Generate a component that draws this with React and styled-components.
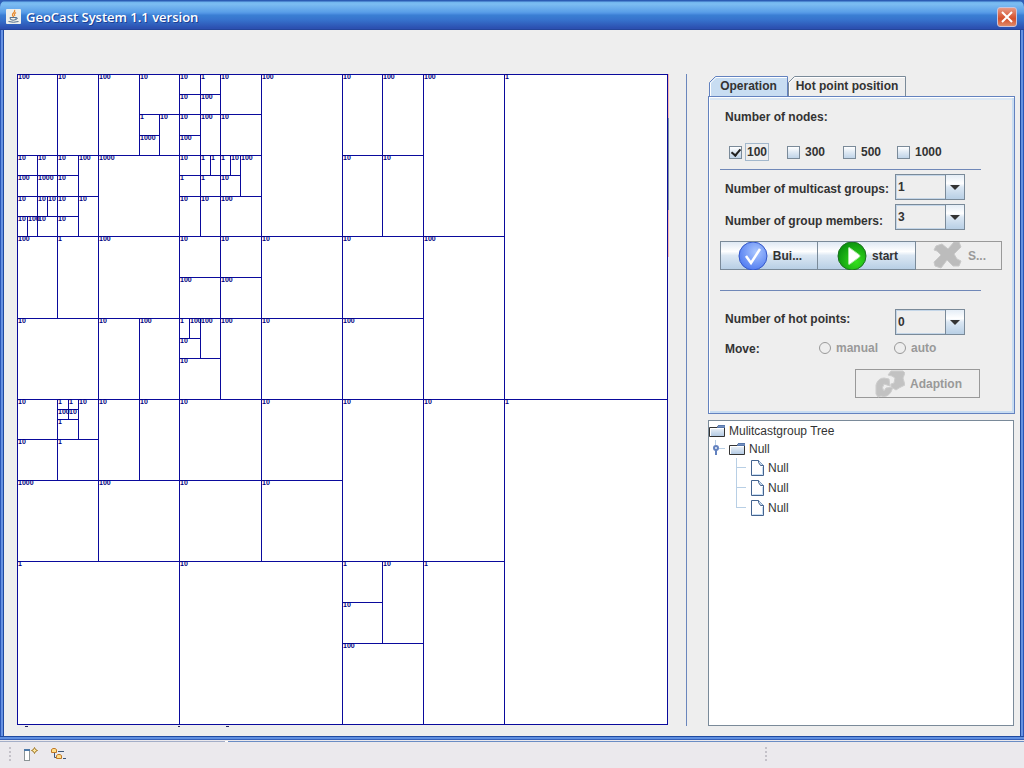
import React from 'react';
import styled, { createGlobalStyle, css } from 'styled-components';

const GlobalStyle = createGlobalStyle`
  * { box-sizing: border-box; }
  body {
    margin: 0;
    background: #ebe9ed;
    color: #333;
    font: bold 12px/18px "Liberation Sans", Arial, sans-serif;
  }
  button, select, input { font: inherit; color: inherit; margin: 0; }
`;

/* ---------- window frame ---------- */

const Desktop = styled.div`
  min-height: 100vh;
  display: flex;
  flex-direction: column;
  background: #2f5fb8;
`;

const Frame = styled.div`
  display: flex;
  flex-direction: column;
`;

const TitleBar = styled.header`
  height: 30px;
  display: flex;
  align-items: center;
  gap: 5px;
  padding: 4px 7px 0 6px;
  border-radius: 7px 7px 0 0;
  border-bottom: 1px solid #24459a;
  background: linear-gradient(#2c5cb4 0, #2c5cb4 1px, #6fb4ee 2px, #7dbdf2 4px, #5a9fe8 12px, #4a8de0 14px, #3a7fd4 15px, #3672cc 20px, #2c50b0 28px);
`;

const Title = styled.h1`
  flex: 1;
  margin: 0;
  color: #fff;
  font: 600 13px/18px "Open Sans", "Noto Sans", sans-serif;
  text-shadow: 1px 1px 0 #1c3f94;
`;

const CloseButton = styled.button`
  width: 20px;
  height: 20px;
  padding: 0;
  display: grid;
  place-items: center;
  border: 1px solid #c9c4dc;
  border-radius: 3px;
  background: linear-gradient(#e79a86, #d9603f 45%, #d4502c 60%, #e08a68);
`;

const Sides = styled.div`
  padding: 0 3px;
  border: solid #2a57b8;
  border-width: 0 1px;
  background: #6792e2;
`;

const Body = styled.main`
  display: grid;
  grid-template-columns: minmax(0, 1fr) 1px 310px;
  column-gap: 18px;
  padding: 44px 5px 10px 13px;
  background: #eee;
  box-shadow: -1px 0 0 #1f4aa0, 1px 0 0 #1f4aa0;
`;

const FrameBottom = styled.div`
  height: 4px;
  background: linear-gradient(#1f4aa0 0 1px, #5f8fe0 1px 3px, #3560b8 3px 4px);
`;

const Divider = styled.div`
  background: #6a86bc;
`;

const Side = styled.aside`
  display: flex;
  flex-direction: column;
  min-width: 0;
  padding-left: 3px;
`;

/* ---------- cell map ---------- */

const MapSvg = styled.svg`
  display: block;
  width: 100%;
  height: auto;
  overflow: visible;
  rect { fill: #fff; stroke: #0a0a9c; stroke-width: 1; }
  text { font: bold 7px "Liberation Sans", Arial, sans-serif; fill: #000080; }
`;

// x, y, width, height in 1/64 of the area, then the cell's capacity
const CELLS = [
  [0, 0, 4, 8, 100], [4, 0, 4, 8, 10], [8, 0, 4, 8, 100], [12, 0, 4, 4, 10],
  [12, 4, 2, 2, 1], [12, 6, 2, 2, 1000], [14, 4, 2, 4, 10],
  [16, 0, 2, 2, 10], [18, 0, 2, 2, 1], [16, 2, 2, 2, 10], [18, 2, 2, 2, 100],
  [20, 0, 4, 4, 10], [16, 4, 2, 2, 10], [16, 6, 2, 2, 100], [18, 4, 2, 4, 100],
  [20, 4, 4, 4, 10], [24, 0, 8, 16, 100], [32, 0, 4, 8, 10], [36, 0, 4, 8, 100],
  [32, 8, 4, 8, 10], [36, 8, 4, 8, 10], [40, 0, 8, 16, 100], [48, 0, 16, 32, 1],
  [0, 8, 2, 2, 10], [2, 8, 2, 2, 10], [4, 8, 2, 2, 10], [6, 8, 2, 4, 100],
  [0, 10, 2, 2, 100], [2, 10, 2, 2, 1000], [4, 10, 2, 2, 10],
  [0, 12, 2, 2, 10], [2, 12, 1, 2, 10], [3, 12, 1, 2, 10], [4, 12, 2, 2, 10],
  [6, 12, 2, 4, 10], [0, 14, 1, 2, 10], [1, 14, 1, 2, 100], [2, 14, 2, 2, 10],
  [4, 14, 2, 2, 10], [8, 8, 8, 8, 1000],
  [16, 8, 2, 2, 10], [18, 8, 1, 2, 1], [19, 8, 1, 2, 1], [20, 8, 1, 2, 1],
  [21, 8, 1, 2, 10], [22, 8, 2, 4, 100], [16, 10, 2, 2, 1], [18, 10, 2, 2, 1],
  [20, 10, 2, 2, 10], [16, 12, 2, 4, 10], [18, 12, 2, 4, 10], [20, 12, 4, 4, 100],
  [0, 16, 4, 8, 100], [4, 16, 4, 8, 1], [8, 16, 8, 8, 100], [16, 16, 4, 4, 10],
  [20, 16, 4, 4, 10], [16, 20, 4, 4, 100], [20, 20, 4, 4, 100], [24, 16, 8, 8, 10],
  [32, 16, 8, 8, 10], [40, 16, 8, 16, 100],
  [0, 24, 8, 8, 10], [8, 24, 4, 8, 10], [12, 24, 4, 8, 100], [16, 24, 1, 2, 1],
  [17, 24, 1, 2, 100], [18, 24, 2, 4, 100], [16, 26, 2, 2, 10], [16, 28, 4, 4, 10],
  [20, 24, 4, 8, 100], [24, 24, 8, 8, 10], [32, 24, 8, 8, 100],
  [0, 32, 4, 4, 10], [4, 32, 1, 1, 1], [5, 32, 1, 1, 1], [6, 32, 2, 4, 10],
  [4, 33, 1, 1, 100], [5, 33, 1, 1, 10], [4, 34, 2, 2, 1], [0, 36, 4, 4, 10],
  [4, 36, 4, 4, 1], [8, 32, 4, 8, 10], [12, 32, 4, 8, 10], [16, 32, 8, 8, 10],
  [24, 32, 8, 8, 10], [32, 32, 8, 16, 10], [40, 32, 8, 16, 10], [48, 32, 16, 32, 1],
  [0, 40, 8, 8, 1000], [8, 40, 8, 8, 100], [16, 40, 8, 8, 10], [24, 40, 8, 8, 10],
  [0, 48, 16, 16, 1], [16, 48, 16, 16, 10], [32, 48, 4, 4, 1], [36, 48, 4, 8, 10],
  [32, 52, 4, 4, 10], [32, 56, 8, 8, 100], [40, 48, 8, 16, 1],
];

const pos = (u) => Math.round((u * 650) / 64 - 0.2);

function CellMap() {
  return (
    <MapSvg viewBox="0 0 651 652" role="img" aria-label="Cell map">
      {CELLS.map(([x, y, w, h]) => (
        <rect
          key={`${x}-${y}`}
          x={pos(x) + 0.5}
          y={pos(y) + 0.5}
          width={pos(x + w) - pos(x)}
          height={pos(y + h) - pos(y)}
        />
      ))}
      {CELLS.map(([x, y, , , label]) => (
        <text key={`${x}-${y}`} x={pos(x) + 1} y={pos(y) + 5}>{label}</text>
      ))}
      <path d="M8 652.5h3M161 652.5h2M209 652.5h3" stroke="#222260" />
      <path d="M651.5 0V44M651.5 136V183" stroke="#f5b5ac" />
      <path d="M651.5 44V136" stroke="#7a8fa0" />
    </MapSvg>
  );
}

/* ---------- tabs and panel ---------- */

const Tabs = styled.div`
  display: flex;
  height: 22px;
  padding: 2px 0 0 1px;
`;

const Tab = styled.button`
  position: relative;
  width: ${(p) => p.$width}px;
  height: 20px;
  padding: 0 0 1px;
  border: 0;
  background: none;
  z-index: 0;
  svg { position: absolute; inset: 0; z-index: -1; }
`;

function TabButton({ selected, width, children }) {
  const edge = selected ? '#6382bf' : '#7a8a99';
  return (
    <Tab $width={width} role="tab" aria-selected={selected}>
      <svg width={width} height="20">
        <path
          d={`M.5 20V6.5L6.5 .5H${width - 0.5}V20`}
          fill={selected ? '#c8ddf2' : '#eee'}
          stroke={edge}
        />
        <path d={`M1.5 20V7L7 1.5H${width - 1}`} fill="none" stroke="#fff" />
      </svg>
      {children}
    </Tab>
  );
}

const Panel = styled.section`
  display: flex;
  flex-direction: column;
  padding: 11px 11px 15px;
  border: 1px solid #6382bf;
  box-shadow: inset 1px 1px 0 #fff, inset -2px -2px 0 #c8ddf2, inset 0 3px 0 #dbe7f3;
`;

const Caption = styled.div`
  padding-left: 5px;
`;

const Rule = styled.hr`
  width: 261px;
  height: 1px;
  margin: ${(p) => p.$top}px 0 ${(p) => p.$bottom}px;
  border: 0;
  background: #7088b8;
`;

const Checks = styled.div`
  display: grid;
  grid-template-columns: 58px 56px 54px auto;
  align-items: center;
  height: 22px;
  margin-top: 15px;
  padding-left: 9px;
`;

const Option = styled.label`
  display: flex;
  align-items: center;
  gap: 3px;
  ${(p) => p.$disabled && css`color: #999;`}
`;

const OptionText = styled.span`
  padding: 0 1px;
  border: 1px solid ${(p) => (p.$focused ? '#a3b8cc' : 'transparent')};
  line-height: 16px;
`;

const Check = styled.input.attrs({ type: 'checkbox' })`
  appearance: none;
  width: 13px;
  height: 13px;
  border: 1px solid #7a8a99;
  background: linear-gradient(#fff, #dde8f3 50%, #c0d4e8);
  display: grid;
  place-items: center;
  &:checked::after {
    content: "";
    width: 4px;
    height: 7px;
    border: solid #222;
    border-width: 0 2px 2px 0;
    transform: rotate(40deg);
    margin-top: -2px;
  }
`;

const Radio = styled.input.attrs({ type: 'radio' })`
  appearance: none;
  width: 12px;
  height: 12px;
  border: 1px solid #999;
  border-radius: 50%;
`;

const Field = styled.div`
  display: flex;
  justify-content: space-between;
  align-items: flex-start;
  height: 26px;
  margin-bottom: 4px;
  padding: 0 38px 0 5px;
  label { padding-top: ${(p) => p.$drop}px; }
`;

const Combo = styled.span`
  position: relative;
  width: 70px;
  height: 26px;
`;

const Select = styled.select`
  appearance: none;
  width: 70px;
  height: 26px;
  padding: 0 22px 1px 2px;
  border: 1px solid #7a8a99;
  border-radius: 0;
  background: #eee;
  box-shadow: inset 0 0 0 1px #c4d6e8;
`;

const Arrow = styled.span`
  position: absolute;
  top: 0;
  right: 0;
  width: 20px;
  height: 26px;
  display: grid;
  place-items: center;
  border: 1px solid #7a8a99;
  background: linear-gradient(#e4edf6, #fff 35%, #dbe7f3 50%, #b8cfe5);
  pointer-events: none;
`;

function ComboField({ id, label, value, drop }) {
  return (
    <Field $drop={drop}>
      <label htmlFor={id}>{label}</label>
      <Combo>
        <Select id={id} defaultValue={value}>
          <option>0</option>
          <option>1</option>
          <option>2</option>
          <option>3</option>
        </Select>
        <Arrow>
          <svg width="10" height="5"><path d="M0 0H10L5 5Z" fill="#333" /></svg>
        </Arrow>
      </Combo>
    </Field>
  );
}

const Buttons = styled.div`
  display: flex;
  margin-top: 7px;
`;

const PushButton = styled.button`
  display: flex;
  align-items: center;
  justify-content: center;
  gap: 5px;
  width: ${(p) => p.$width}px;
  height: 29px;
  padding: 0 0 0 2px;
  border: 1px solid #7a8a99;
  background: linear-gradient(#dfe9f4, #fff 35%, #dbe7f3 50%, #b8cfe5);
  & + & { border-left-width: 0; }
  &:disabled {
    color: #999;
    background: #eee;
    border-color: #999;
  }
  svg { flex: none; }
`;

const MoveRow = styled.div`
  display: flex;
  align-items: center;
  height: 18px;
  padding-left: 5px;
`;

const MoveLabel = styled.span`
  width: 94px;
  padding-top: 2px;
`;

const Radios = styled.div`
  display: flex;
  gap: 14px;
`;

const AdaptionRow = styled.div`
  display: flex;
  justify-content: flex-end;
  margin-top: 12px;
  padding-right: 23px;
`;

/* ---------- tree ---------- */

const Tree = styled.div`
  flex: 1;
  margin: 6px 1px 0 0;
  padding-top: 1px;
  border: 1px solid #7a8a99;
  background: #fff;
  font-weight: normal;
  ul { list-style: none; margin: 0; padding: 0; }
`;

const TreeRow = styled.div`
  display: flex;
  align-items: center;
  gap: 4px;
  height: ${(p) => p.$height}px;
  padding-left: ${(p) => p.$indent}px;
`;

const Folder = () => (
  <svg width="16" height="14">
    <defs>
      <linearGradient id="folder" x2="0" y2="1">
        <stop offset="0" stopColor="#fff" />
        <stop offset="1" stopColor="#b0c8e2" />
      </linearGradient>
    </defs>
    <path d="M.5 3.5H8L9.500 1.500H15.500V12.500H.5Z" fill="url(#folder)" stroke="#333" />
    <path d="M9 1.500H16V3.500H8" fill="#7590c0" stroke="#5878ac" />
    <path d="M1.500 12V4.500H15" fill="none" stroke="#fff" />
  </svg>
);

const Sheet = () => (
  <svg width="13" height="16">
    <path d="M.5 .5H7.500L12.500 5.500V15.500H.5Z" fill="#fff" stroke="#44638f" />
    <path d="M7.500 .5V2.500L9.500 5.500H12.500" fill="#c8ddf2" stroke="#44638f" />
    <path d="M11.500 7V14.500H1.500" fill="none" stroke="#c8ddf2" />
  </svg>
);

const Handle = () => (
  <svg width="14" height="18">
    <path d="M4.500 0V5M8 8.500H14" stroke="#b8cfe5" />
    <circle cx="5" cy="8" r="2" fill="#e8f0fa" stroke="#6382bf" strokeWidth="2" />
    <path d="M5 10V15" stroke="#6382bf" strokeWidth="2" />
  </svg>
);

const Branch = ({ last }) => (
  <svg width="11" height="20">
    <path d={`M.5 0V${last ? 10 : 20}M0 9.500H10`} stroke="#b8cfe5" fill="none" />
  </svg>
);

/* ---------- button and title icons ---------- */

const JavaIcon = () => (
  <svg width="15" height="15">
    <rect width="15" height="15" rx="1" fill="#eef0ec" />
    <path d="M8.500 1C10 3 6 4 6.500 6C6.700 7 7.500 7 7.500 8M10 3.500C8 5 8 5.500 9 7" fill="none" stroke="#e88a2c" strokeWidth="1.300" />
    <path d="M4 8.500H10V10.500Q7 12 4.500 10.500ZM10 8.500Q12.500 8.500 10.500 10.500M2.500 12.500Q7.500 14 12.500 12.500" fill="none" stroke="#55718e" />
  </svg>
);

const BuildIcon = () => (
  <svg width="30" height="28" viewBox="0 0 30 28">
    <defs>
      <radialGradient id="build" cx=".6" cy=".35" r=".7">
        <stop offset="0" stopColor="#a9c6ff" />
        <stop offset="1" stopColor="#4f7af0" />
      </radialGradient>
    </defs>
    <circle cx="15" cy="14" r="14" fill="url(#build)" stroke="#3558c8" />
    <path d="M8 14L13 21L22 7" fill="none" stroke="#fff" strokeWidth="2.500" />
  </svg>
);

const StartIcon = () => (
  <svg width="30" height="28" viewBox="0 0 30 28">
    <defs>
      <radialGradient id="start" cx=".65" cy=".7" r=".8">
        <stop offset="0" stopColor="#35e01c" />
        <stop offset="1" stopColor="#058a0c" />
      </radialGradient>
    </defs>
    <circle cx="15" cy="14" r="14" fill="url(#start)" stroke="#1d7020" />
    <path d="M11.500 6.500Q11.500 5 13 6L22.500 13Q23.500 14 22.500 15L13 22Q11.500 23 11.500 21.500Z" fill="#fff" stroke="#a8e8a0" />
  </svg>
);

const StopIcon = () => (
  <svg width="30" height="28" viewBox="0 0 30 28">
    <path
      d="M3 4L9 2L15 7L21 0H26L28 5L21 12L24 17L28 19L26 24L20 24L14 18L8 26L2 24L1 20L8 13L4 9L1 8Z"
      fill="#bcbcbc"
      stroke="#c8c8c8"
      strokeLinejoin="round"
    />
  </svg>
);

const AdaptionIcon = () => (
  <svg width="30" height="28" viewBox="0 0 30 28">
    <path d="M1 24L1 15Q3 8 9 8L14 9L15 16L9 14Q6 18 9 21L11 18L18 17L16 22Q12 28 6 26L3 27Z" fill="#c2c2c2" stroke="#cdcdcd" />
    <path d="M13 5L16 1H28L30 3L28 8L30 15L24 18L21 20L16 17V14L19 13L20 8L17 6Z" fill="#c2c2c2" stroke="#cdcdcd" />
  </svg>
);

/* ---------- status bar ---------- */

const StatusBar = styled.footer`
  flex: 1;
  min-height: 28px;
  display: flex;
  align-items: center;
  padding: 0 8px;
  background: linear-gradient(90deg, #a3aec8 0 225px, #fff 225px 228px, #6a8cc4 228px) 0 1px / 100% 1px no-repeat #ebe9ed;
`;

const StatusTools = styled.div`
  flex: 3;
  display: flex;
  align-items: center;
  gap: 12px;
`;

const StatusRest = styled.div`
  display: flex;
  flex: 1;
`;

const Grip = () => (
  <svg width="4" height="14">
    <path d="M1 1h2M1 5h2M1 9h2M1 13h2" stroke="#9d9aa5" />
  </svg>
);

const NewViewIcon = () => (
  <svg width="15" height="14">
    <rect x=".5" y="2.500" width="5" height="11" fill="#fff" stroke="#8c9496" />
    <path d="M0 3H6" stroke="#4c78a8" strokeWidth="2" />
    <path d="M10.500 .5L11.500 2.500L13.500 3.500L11.500 4.500L10.500 6.500L9.500 4.500L7.500 3.500L9.500 2.500Z" fill="#ffe9a0" stroke="#a07828" />
  </svg>
);

const HierarchyIcon = () => (
  <svg width="16" height="14">
    <path d="M3.500 6V10.500H6M7 4.500H13M12 11.500H15" fill="none" stroke="#3e5878" />
    <path d="M.5 5.500V2.500L2 1.500H4L5.500 2.500V5.500ZM5.500 11.500V8.500L7 7.500H9L10.500 8.500V11.500Z" fill="#ffe08a" stroke="#c07828" />
  </svg>
);

export default function App() {
  return (
    <Desktop>
      <GlobalStyle />
      <Frame>
        <TitleBar>
          <JavaIcon />
          <Title>GeoCast System 1.1 version</Title>
          <CloseButton aria-label="Close">
            <svg width="12" height="12">
              <path d="M1 1L11 11M11 1L1 11" stroke="#fff" strokeWidth="2" />
            </svg>
          </CloseButton>
        </TitleBar>
        <Sides>
          <Body>
            <CellMap />
            <Divider />
            <Side>
              <Tabs role="tablist">
                <TabButton selected width={79}>Operation</TabButton>
                <TabButton width={118}>Hot point position</TabButton>
              </Tabs>
              <Panel>
                <Caption>Number of nodes:</Caption>
                <Checks>
                  <Option><Check defaultChecked /><OptionText $focused>100</OptionText></Option>
                  <Option><Check /><OptionText>300</OptionText></Option>
                  <Option><Check /><OptionText>500</OptionText></Option>
                  <Option><Check /><OptionText>1000</OptionText></Option>
                </Checks>
                <Rule $top={6} $bottom={4} />
                <ComboField id="groups" label="Number of multicast groups:" value="1" drop={6} />
                <ComboField id="members" label="Number of group members:" value="3" drop={8} />
                <Buttons>
                  <PushButton $width={98}><BuildIcon />Bui...</PushButton>
                  <PushButton $width={98}><StartIcon />start</PushButton>
                  <PushButton $width={86} disabled><StopIcon />S...</PushButton>
                </Buttons>
                <Rule $top={20} $bottom={18} />
                <ComboField id="hot" label="Number of hot points:" value="0" drop={1} />
                <MoveRow>
                  <MoveLabel>Move:</MoveLabel>
                  <Radios>
                    <Option $disabled><Radio name="move" disabled /><OptionText>manual</OptionText></Option>
                    <Option $disabled><Radio name="move" disabled /><OptionText>auto</OptionText></Option>
                  </Radios>
                </MoveRow>
                <AdaptionRow>
                  <PushButton $width={125} disabled><AdaptionIcon />Adaption</PushButton>
                </AdaptionRow>
              </Panel>
              <Tree>
                <ul>
                  <li>
                    <TreeRow $height={18} $indent={0}><Folder />Mulitcastgroup Tree</TreeRow>
                    <ul>
                      <li>
                        <TreeRow $height={18} $indent={2}><Handle /><Folder />Null</TreeRow>
                        <ul>
                          <li><TreeRow $height={20} $indent={27}><Branch /><Sheet />Null</TreeRow></li>
                          <li><TreeRow $height={20} $indent={27}><Branch /><Sheet />Null</TreeRow></li>
                          <li><TreeRow $height={20} $indent={27}><Branch last /><Sheet />Null</TreeRow></li>
                        </ul>
                      </li>
                    </ul>
                  </li>
                </ul>
              </Tree>
            </Side>
          </Body>
        </Sides>
        <FrameBottom />
      </Frame>
      <StatusBar>
        <StatusTools>
          <Grip />
          <NewViewIcon />
          <HierarchyIcon />
        </StatusTools>
        <StatusRest><Grip /></StatusRest>
      </StatusBar>
    </Desktop>
  );
}
